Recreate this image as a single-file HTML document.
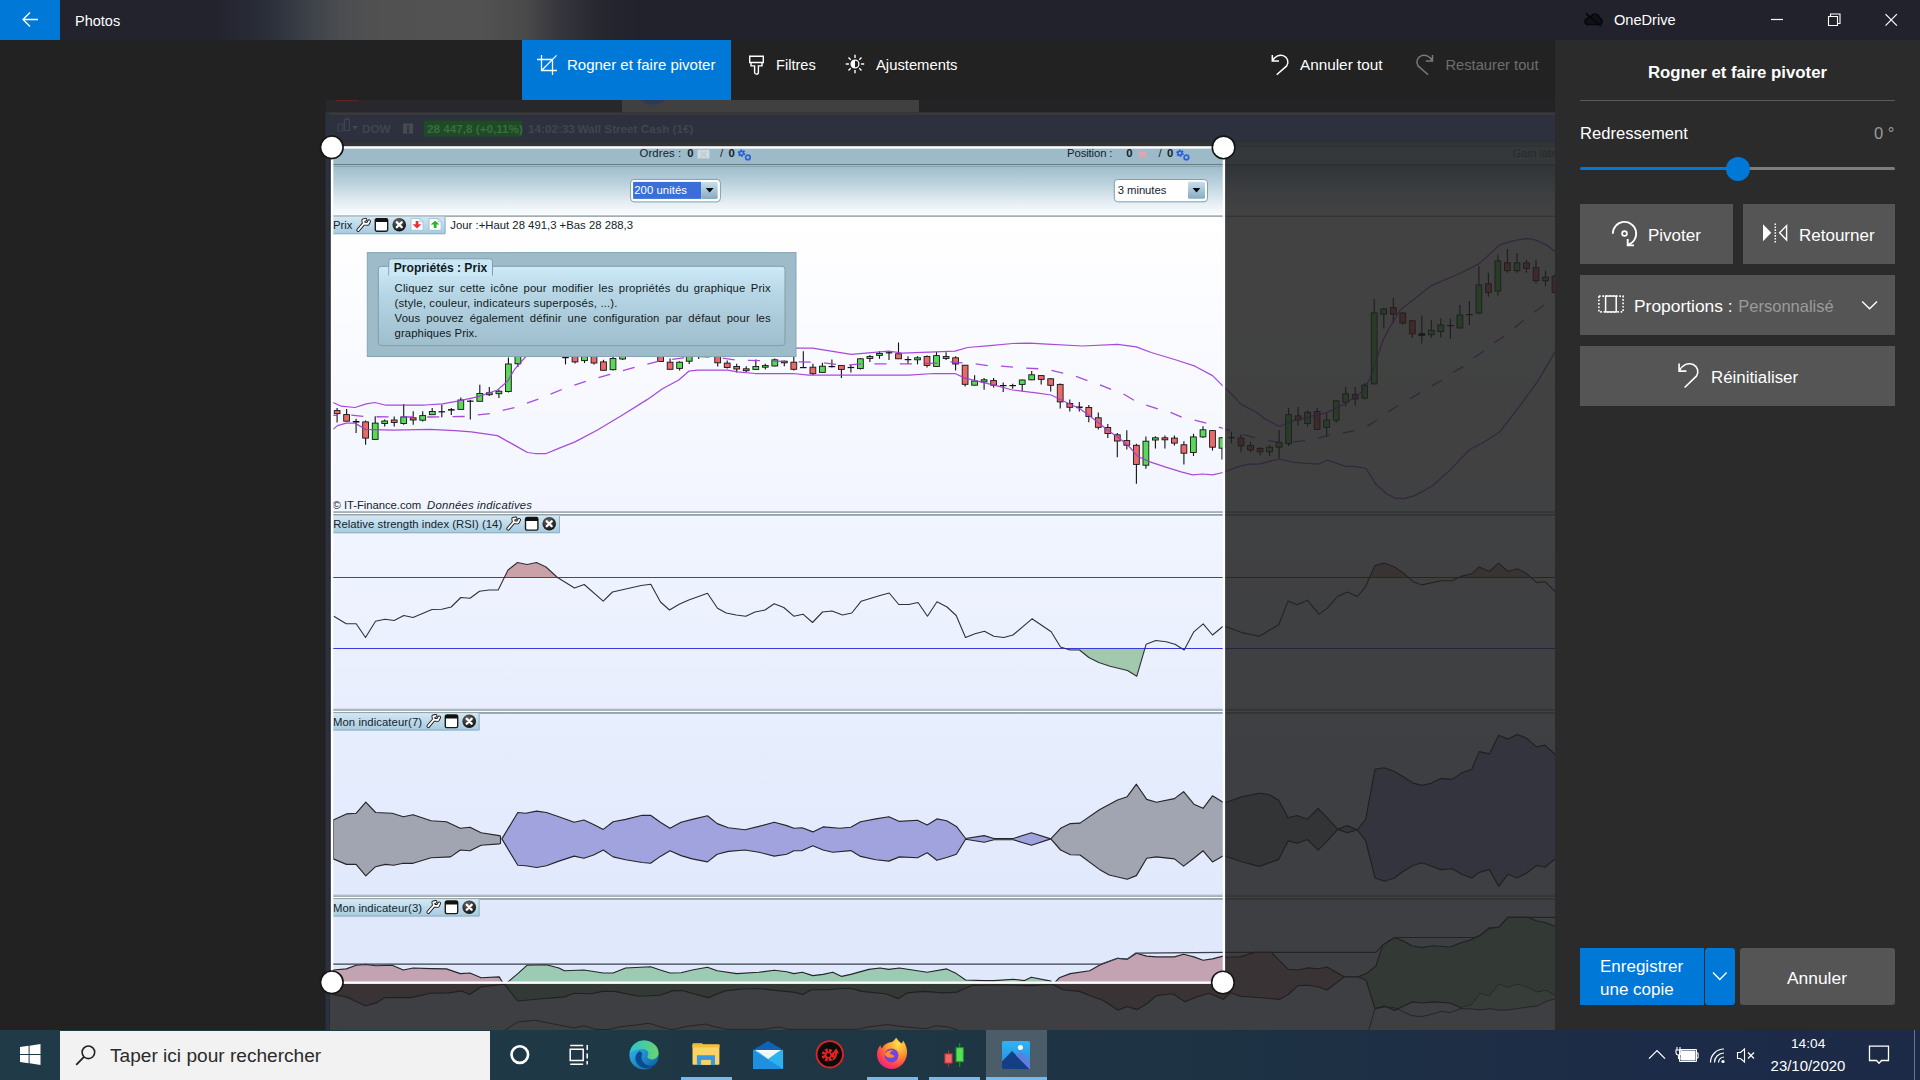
<!DOCTYPE html><html><head><meta charset="utf-8"><title>Photos</title><style>

*{box-sizing:border-box}
html,body{margin:0;padding:0}
body{width:1920px;height:1080px;overflow:hidden;background:#222222;position:relative;font-family:"Liberation Sans",sans-serif;color:#fff}
.abs{position:absolute}
#titlebar{left:0;top:0;width:1920px;height:40px;background:linear-gradient(90deg,#23232e 0px,#23232e 215px,#2b2f3a 270px,#3b4048 305px,#4b4d50 340px,#515151 380px,#525252 480px,#4a4a4a 525px,#35353d 560px,#26262f 600px,#22222d 640px,#22222d 1920px)}
#back{left:0;top:0;width:60px;height:40px;background:#0078d7}
.t{position:absolute;white-space:nowrap;line-height:1}
#toolbar{left:0;top:40px;width:1555px;height:60px;background:#222222}
#tab{left:522px;top:40px;width:209px;height:60px;background:#0078d7}
#panel{left:1555px;top:40px;width:365px;height:990px;background:#2b2b2b}
.btn{position:absolute;background:#555555}
#taskbar{left:0;top:1030px;width:1920px;height:50px;background:linear-gradient(90deg,#203a47 0px,#1f3845 600px,#1e3444 1100px,#1d2f44 1400px,#1c2b47 1650px,#1c2a48 1920px)}
#search{left:60px;top:1031px;width:430px;height:49px;background:#f2f2f2}
.ul{position:absolute;top:1077px;height:3px;background:#76b9ed}
#canvas{left:0;top:100px;width:1555px;height:930px;overflow:hidden}
.tip{position:absolute;font-size:11.3px;color:#111a20;white-space:nowrap;line-height:1}
.j{text-align:justify;text-align-last:justify;white-space:normal}

</style></head><body>
<div id="canvas" class="abs">
<svg class="abs" style="left:0;top:0" width="1555" height="930" viewBox="0 100 1555 930" font-family="Liberation Sans, sans-serif" font-size="11.3">
<defs>
<linearGradient id="hdr" x1="0" y1="0" x2="0" y2="1"><stop offset="0" stop-color="#9fbccb"/><stop offset="0.350" stop-color="#bcd2dd"/><stop offset="0.750" stop-color="#e6eff4"/><stop offset="1" stop-color="#fcfdfe"/></linearGradient>
<linearGradient id="pp" x1="0" y1="0" x2="0" y2="1"><stop offset="0" stop-color="#ffffff"/><stop offset="1" stop-color="#f2f5ff"/></linearGradient>
<linearGradient id="pr" x1="0" y1="0" x2="0" y2="1"><stop offset="0" stop-color="#f1f5ff"/><stop offset="1" stop-color="#e8eefd"/></linearGradient>
<linearGradient id="p2" x1="0" y1="0" x2="0" y2="1"><stop offset="0" stop-color="#e7eefd"/><stop offset="1" stop-color="#e1e9fc"/></linearGradient>
<linearGradient id="lbl" x1="0" y1="0" x2="0" y2="1"><stop offset="0" stop-color="#d3e8f3"/><stop offset="1" stop-color="#a6cadf"/></linearGradient>
<linearGradient id="tipg" x1="0" y1="0" x2="0" y2="1"><stop offset="0" stop-color="#cdeaf8"/><stop offset="0.350" stop-color="#b7d6e5"/><stop offset="1" stop-color="#9fbecd"/></linearGradient>
<linearGradient id="btng" x1="0" y1="0" x2="0" y2="1"><stop offset="0" stop-color="#c8deea"/><stop offset="1" stop-color="#86acc1"/></linearGradient>
<radialGradient id="xg" cx="0.400" cy="0.300" r="0.800"><stop offset="0" stop-color="#6a6a6a"/><stop offset="1" stop-color="#050505"/></radialGradient>
<clipPath id="chclip"><rect x="329.500" y="147" width="1226" height="884"/></clipPath>
<clipPath id="cropclip"><rect x="332" y="147.400" width="891.700" height="835.200"/></clipPath>
</defs>
<g clip-path="url(#chclip)">
<rect x="329.5" y="147" width="1225.5" height="17.200" fill="#9dbac8"/>
<rect x="329.5" y="164.200" width="1225.5" height="1" fill="#708d9b"/>
<rect x="329.5" y="165.200" width="1225.5" height="1" fill="#c4d9e3"/>
<rect x="329.5" y="166.200" width="1225.5" height="49.600" fill="url(#hdr)"/>
<rect x="329.5" y="215.600" width="1225.5" height="1" fill="#9cb1bc"/>
<rect x="329.5" y="216.600" width="1225.5" height="295" fill="url(#pp)"/>
<rect x="329.5" y="511.0" width="1225.5" height="1.800" fill="#abbcc4"/>
<rect x="329.5" y="512.8" width="1225.5" height="1.500" fill="#fbfdff"/>
<rect x="329.5" y="514.3" width="1225.5" height="1.600" fill="#a9bac6"/>
<rect x="329.5" y="708.9" width="1225.5" height="1.800" fill="#abbcc4"/>
<rect x="329.5" y="710.6999999999999" width="1225.5" height="1.500" fill="#fbfdff"/>
<rect x="329.5" y="712.1999999999999" width="1225.5" height="1.600" fill="#a9bac6"/>
<rect x="329.5" y="894.9" width="1225.5" height="1.800" fill="#abbcc4"/>
<rect x="329.5" y="896.6999999999999" width="1225.5" height="1.500" fill="#fbfdff"/>
<rect x="329.5" y="898.1999999999999" width="1225.5" height="1.600" fill="#a9bac6"/>
<rect x="329.5" y="515.900" width="1225.5" height="193" fill="url(#pr)"/>
<rect x="329.5" y="713.800" width="1225.5" height="181.100" fill="url(#p2)"/>
<rect x="329.5" y="899.800" width="1225.5" height="131" fill="#e0e8fc"/>
<path d="M337.1 408.1V422.5" stroke="#111" stroke-width="1.1"/>
<rect x="334.2" y="410.6" width="5.8" height="3.1" fill="#e96a6a" stroke="#151515" stroke-width="0.9"/>
<path d="M346.6 409.1V421.2" stroke="#111" stroke-width="1.1"/>
<rect x="343.7" y="414.6" width="5.8" height="6.6" fill="#e96a6a" stroke="#151515" stroke-width="0.9"/>
<path d="M356.1 418.8V433.1" stroke="#111" stroke-width="1.1"/>
<rect x="352.8" y="421.0" width="6.6" height="1.5" fill="#111"/>
<path d="M365.6 420.6V444.8" stroke="#111" stroke-width="1.1"/>
<rect x="362.7" y="421.9" width="5.8" height="16.2" fill="#e96a6a" stroke="#151515" stroke-width="0.9"/>
<path d="M375.2 416.2V439.4" stroke="#111" stroke-width="1.1"/>
<rect x="372.3" y="423.1" width="5.8" height="16.3" fill="#58d958" stroke="#151515" stroke-width="0.9"/>
<path d="M384.7 419.4V426.5" stroke="#111" stroke-width="1.1"/>
<rect x="381.8" y="421.0" width="5.8" height="2.5" fill="#58d958" stroke="#151515" stroke-width="0.9"/>
<path d="M394.2 416.5V426.5" stroke="#111" stroke-width="1.1"/>
<rect x="391.3" y="420.0" width="5.8" height="2.5" fill="#e96a6a" stroke="#151515" stroke-width="0.9"/>
<path d="M403.7 404.0V424.8" stroke="#111" stroke-width="1.1"/>
<rect x="400.8" y="416.9" width="5.8" height="6.6" fill="#58d958" stroke="#151515" stroke-width="0.9"/>
<path d="M413.2 411.2V424.8" stroke="#111" stroke-width="1.1"/>
<rect x="410.3" y="417.8" width="5.8" height="2.2" fill="#e96a6a" stroke="#151515" stroke-width="0.9"/>
<path d="M422.7 411.2V421.5" stroke="#111" stroke-width="1.1"/>
<rect x="419.8" y="415.6" width="5.8" height="4.6" fill="#58d958" stroke="#151515" stroke-width="0.9"/>
<path d="M432.2 408.1V415.0" stroke="#111" stroke-width="1.1"/>
<rect x="429.4" y="411.5" width="5.8" height="3.2" fill="#58d958" stroke="#151515" stroke-width="0.9"/>
<path d="M441.8 404.4V417.2" stroke="#111" stroke-width="1.1"/>
<rect x="438.5" y="411.2" width="6.6" height="1.2" fill="#111"/>
<path d="M451.3 408.1V415.0" stroke="#111" stroke-width="1.1"/>
<rect x="448.0" y="409.1" width="6.6" height="1.5" fill="#111"/>
<path d="M460.8 397.5V409.4" stroke="#111" stroke-width="1.1"/>
<rect x="457.9" y="400.0" width="5.8" height="9.4" fill="#58d958" stroke="#151515" stroke-width="0.9"/>
<path d="M470.3 399.8V419.4" stroke="#111" stroke-width="1.1"/>
<rect x="467.0" y="400.6" width="6.6" height="1.2" fill="#111"/>
<path d="M479.8 384.8V401.2" stroke="#111" stroke-width="1.1"/>
<rect x="476.9" y="393.5" width="5.8" height="7.8" fill="#58d958" stroke="#151515" stroke-width="0.9"/>
<path d="M489.3 386.9V396.0" stroke="#111" stroke-width="1.1"/>
<rect x="486.4" y="392.8" width="5.8" height="1.9" fill="#58d958" stroke="#151515" stroke-width="0.9"/>
<path d="M498.9 389.8V398.1" stroke="#111" stroke-width="1.1"/>
<rect x="496.0" y="391.2" width="5.8" height="2.5" fill="#58d958" stroke="#151515" stroke-width="0.9"/>
<path d="M508.4 357.5V392.5" stroke="#111" stroke-width="1.1"/>
<rect x="505.5" y="364.0" width="5.8" height="27.5" fill="#58d958" stroke="#151515" stroke-width="0.9"/>
<path d="M517.9 340.0V367.0" stroke="#111" stroke-width="1.1"/>
<rect x="515.0" y="342.0" width="5.8" height="21.8" fill="#58d958" stroke="#151515" stroke-width="0.9"/>
<path d="M565.5 357.2V364.4" stroke="#111" stroke-width="1.1"/>
<rect x="562.2" y="357.0" width="6.6" height="1.2" fill="#111"/>
<path d="M575.0 350.0V363.5" stroke="#111" stroke-width="1.1"/>
<rect x="572.1" y="352.0" width="5.8" height="9.9" fill="#e96a6a" stroke="#151515" stroke-width="0.9"/>
<path d="M584.5 350.0V363.0" stroke="#111" stroke-width="1.1"/>
<rect x="581.6" y="352.0" width="5.8" height="8.6" fill="#58d958" stroke="#151515" stroke-width="0.9"/>
<path d="M594.0 350.0V364.4" stroke="#111" stroke-width="1.1"/>
<rect x="591.1" y="352.0" width="5.8" height="11.0" fill="#e96a6a" stroke="#151515" stroke-width="0.9"/>
<path d="M603.5 359.8V370.2" stroke="#111" stroke-width="1.1"/>
<rect x="600.6" y="361.9" width="5.8" height="8.4" fill="#e96a6a" stroke="#151515" stroke-width="0.9"/>
<path d="M613.0 352.0V370.6" stroke="#111" stroke-width="1.1"/>
<rect x="610.1" y="358.5" width="5.8" height="11.2" fill="#58d958" stroke="#151515" stroke-width="0.9"/>
<path d="M622.6 350.0V360.0" stroke="#111" stroke-width="1.1"/>
<rect x="619.7" y="352.0" width="5.8" height="7.0" fill="#58d958" stroke="#151515" stroke-width="0.9"/>
<path d="M660.6 350.0V361.5" stroke="#111" stroke-width="1.1"/>
<rect x="657.7" y="352.0" width="5.8" height="9.5" fill="#e96a6a" stroke="#151515" stroke-width="0.9"/>
<path d="M670.1 358.5V369.4" stroke="#111" stroke-width="1.1"/>
<rect x="667.2" y="362.2" width="5.8" height="7.1" fill="#e96a6a" stroke="#151515" stroke-width="0.9"/>
<path d="M679.6 361.2V370.6" stroke="#111" stroke-width="1.1"/>
<rect x="676.7" y="362.2" width="5.8" height="6.2" fill="#58d958" stroke="#151515" stroke-width="0.9"/>
<path d="M689.2 350.0V364.0" stroke="#111" stroke-width="1.1"/>
<rect x="686.3" y="352.0" width="5.8" height="9.2" fill="#58d958" stroke="#151515" stroke-width="0.9"/>
<path d="M698.7 350.0V359.0" stroke="#111" stroke-width="1.1"/>
<rect x="695.4" y="350.0" width="6.6" height="1.2" fill="#111"/>
<path d="M717.7 350.0V366.5" stroke="#111" stroke-width="1.1"/>
<rect x="714.8" y="352.0" width="5.8" height="10.8" fill="#e96a6a" stroke="#151515" stroke-width="0.9"/>
<path d="M727.2 360.6V368.5" stroke="#111" stroke-width="1.1"/>
<rect x="724.3" y="363.1" width="5.8" height="4.4" fill="#e96a6a" stroke="#151515" stroke-width="0.9"/>
<path d="M736.7 363.8V372.5" stroke="#111" stroke-width="1.1"/>
<rect x="733.8" y="366.5" width="5.8" height="2.5" fill="#e96a6a" stroke="#151515" stroke-width="0.9"/>
<path d="M746.2 366.2V371.9" stroke="#111" stroke-width="1.1"/>
<rect x="743.3" y="368.8" width="5.8" height="1.9" fill="#e96a6a" stroke="#151515" stroke-width="0.9"/>
<path d="M755.8 359.4V369.4" stroke="#111" stroke-width="1.1"/>
<rect x="752.9" y="366.5" width="5.8" height="2.9" fill="#58d958" stroke="#151515" stroke-width="0.9"/>
<path d="M765.3 363.8V369.4" stroke="#111" stroke-width="1.1"/>
<rect x="762.4" y="365.6" width="5.8" height="1.6" fill="#58d958" stroke="#151515" stroke-width="0.9"/>
<path d="M774.8 358.5V366.5" stroke="#111" stroke-width="1.1"/>
<rect x="771.9" y="359.8" width="5.8" height="6.2" fill="#58d958" stroke="#151515" stroke-width="0.9"/>
<path d="M784.3 360.6V366.2" stroke="#111" stroke-width="1.1"/>
<rect x="781.4" y="361.2" width="5.8" height="1.6" fill="#e96a6a" stroke="#151515" stroke-width="0.9"/>
<path d="M793.8 356.9V370.6" stroke="#111" stroke-width="1.1"/>
<rect x="790.9" y="362.2" width="5.8" height="7.1" fill="#e96a6a" stroke="#151515" stroke-width="0.9"/>
<path d="M803.3 351.2V368.1" stroke="#111" stroke-width="1.1"/>
<rect x="800.0" y="367.0" width="6.6" height="1.2" fill="#111"/>
<path d="M812.9 363.8V375.0" stroke="#111" stroke-width="1.1"/>
<rect x="810.0" y="367.2" width="5.8" height="6.5" fill="#e96a6a" stroke="#151515" stroke-width="0.9"/>
<path d="M822.4 362.8V372.5" stroke="#111" stroke-width="1.1"/>
<rect x="819.5" y="366.2" width="5.8" height="6.2" fill="#58d958" stroke="#151515" stroke-width="0.9"/>
<path d="M831.9 359.4V367.5" stroke="#111" stroke-width="1.1"/>
<rect x="828.6" y="366.0" width="6.6" height="1.2" fill="#111"/>
<path d="M841.4 365.0V378.1" stroke="#111" stroke-width="1.1"/>
<rect x="838.5" y="365.4" width="5.8" height="4.0" fill="#e96a6a" stroke="#151515" stroke-width="0.9"/>
<path d="M850.9 365.0V372.5" stroke="#111" stroke-width="1.1"/>
<rect x="847.6" y="366.9" width="6.6" height="1.2" fill="#111"/>
<path d="M860.4 358.1V369.4" stroke="#111" stroke-width="1.1"/>
<rect x="857.5" y="358.8" width="5.8" height="9.8" fill="#58d958" stroke="#151515" stroke-width="0.9"/>
<path d="M869.9 355.0V361.9" stroke="#111" stroke-width="1.1"/>
<rect x="867.0" y="356.5" width="5.8" height="2.0" fill="#58d958" stroke="#151515" stroke-width="0.9"/>
<path d="M879.5 351.2V358.8" stroke="#111" stroke-width="1.1"/>
<rect x="876.6" y="353.5" width="5.8" height="1.9" fill="#58d958" stroke="#151515" stroke-width="0.9"/>
<path d="M889.0 351.2V360.0" stroke="#111" stroke-width="1.1"/>
<rect x="885.7" y="352.2" width="6.6" height="1.2" fill="#111"/>
<path d="M898.5 342.5V358.8" stroke="#111" stroke-width="1.1"/>
<rect x="895.6" y="353.8" width="5.8" height="5.0" fill="#e96a6a" stroke="#151515" stroke-width="0.9"/>
<path d="M908.0 356.2V364.0" stroke="#111" stroke-width="1.1"/>
<rect x="904.7" y="359.0" width="6.6" height="1.2" fill="#111"/>
<path d="M917.5 356.2V364.4" stroke="#111" stroke-width="1.1"/>
<rect x="914.6" y="357.8" width="5.8" height="2.0" fill="#58d958" stroke="#151515" stroke-width="0.9"/>
<path d="M927.0 355.6V367.5" stroke="#111" stroke-width="1.1"/>
<rect x="924.1" y="356.5" width="5.8" height="8.9" fill="#e96a6a" stroke="#151515" stroke-width="0.9"/>
<path d="M936.5 351.9V366.5" stroke="#111" stroke-width="1.1"/>
<rect x="933.6" y="355.6" width="5.8" height="10.9" fill="#58d958" stroke="#151515" stroke-width="0.9"/>
<path d="M946.1 352.2V360.0" stroke="#111" stroke-width="1.1"/>
<rect x="943.2" y="356.5" width="5.8" height="2.0" fill="#e96a6a" stroke="#151515" stroke-width="0.9"/>
<path d="M955.6 356.2V370.6" stroke="#111" stroke-width="1.1"/>
<rect x="952.7" y="357.8" width="5.8" height="6.2" fill="#e96a6a" stroke="#151515" stroke-width="0.9"/>
<path d="M965.1 365.0V386.5" stroke="#111" stroke-width="1.1"/>
<rect x="962.2" y="365.2" width="5.8" height="19.1" fill="#e96a6a" stroke="#151515" stroke-width="0.9"/>
<path d="M974.6 375.2V385.2" stroke="#111" stroke-width="1.1"/>
<rect x="971.7" y="381.0" width="5.8" height="4.2" fill="#58d958" stroke="#151515" stroke-width="0.9"/>
<path d="M984.1 378.1V389.8" stroke="#111" stroke-width="1.1"/>
<rect x="981.2" y="379.8" width="5.8" height="2.1" fill="#58d958" stroke="#151515" stroke-width="0.9"/>
<path d="M993.6 378.1V387.5" stroke="#111" stroke-width="1.1"/>
<rect x="990.7" y="380.6" width="5.8" height="4.6" fill="#e96a6a" stroke="#151515" stroke-width="0.9"/>
<path d="M1003.2 382.5V391.9" stroke="#111" stroke-width="1.1"/>
<rect x="999.9" y="385.0" width="6.6" height="1.2" fill="#111"/>
<path d="M1012.7 383.8V388.8" stroke="#111" stroke-width="1.1"/>
<rect x="1009.4" y="385.0" width="6.6" height="1.2" fill="#111"/>
<path d="M1022.2 379.4V391.2" stroke="#111" stroke-width="1.1"/>
<rect x="1019.3" y="380.0" width="5.8" height="4.4" fill="#58d958" stroke="#151515" stroke-width="0.9"/>
<path d="M1031.7 371.0V380.2" stroke="#111" stroke-width="1.1"/>
<rect x="1028.8" y="374.8" width="5.8" height="5.0" fill="#58d958" stroke="#151515" stroke-width="0.9"/>
<path d="M1041.2 375.0V384.4" stroke="#111" stroke-width="1.1"/>
<rect x="1038.3" y="375.6" width="5.8" height="3.8" fill="#e96a6a" stroke="#151515" stroke-width="0.9"/>
<path d="M1050.7 378.1V391.5" stroke="#111" stroke-width="1.1"/>
<rect x="1047.8" y="378.8" width="5.8" height="6.5" fill="#e96a6a" stroke="#151515" stroke-width="0.9"/>
<path d="M1060.2 383.5V408.5" stroke="#111" stroke-width="1.1"/>
<rect x="1057.3" y="384.4" width="5.8" height="17.5" fill="#e96a6a" stroke="#151515" stroke-width="0.9"/>
<path d="M1069.8 399.4V411.5" stroke="#111" stroke-width="1.1"/>
<rect x="1066.9" y="403.5" width="5.8" height="3.8" fill="#e96a6a" stroke="#151515" stroke-width="0.9"/>
<path d="M1079.3 401.9V411.5" stroke="#111" stroke-width="1.1"/>
<rect x="1076.0" y="406.5" width="6.6" height="1.6" fill="#111"/>
<path d="M1088.8 405.0V422.2" stroke="#111" stroke-width="1.1"/>
<rect x="1085.9" y="407.5" width="5.8" height="9.0" fill="#e96a6a" stroke="#151515" stroke-width="0.9"/>
<path d="M1098.3 412.5V429.4" stroke="#111" stroke-width="1.1"/>
<rect x="1095.4" y="417.8" width="5.8" height="9.5" fill="#e96a6a" stroke="#151515" stroke-width="0.9"/>
<path d="M1107.8 424.0V438.1" stroke="#111" stroke-width="1.1"/>
<rect x="1104.9" y="427.5" width="5.8" height="6.0" fill="#e96a6a" stroke="#151515" stroke-width="0.9"/>
<path d="M1117.3 433.1V457.2" stroke="#111" stroke-width="1.1"/>
<rect x="1114.4" y="434.8" width="5.8" height="6.2" fill="#e96a6a" stroke="#151515" stroke-width="0.9"/>
<path d="M1126.8 430.2V449.4" stroke="#111" stroke-width="1.1"/>
<rect x="1123.9" y="440.6" width="5.8" height="4.6" fill="#e96a6a" stroke="#151515" stroke-width="0.9"/>
<path d="M1136.4 443.8V483.8" stroke="#111" stroke-width="1.1"/>
<rect x="1133.5" y="445.3" width="5.8" height="19.1" fill="#e96a6a" stroke="#151515" stroke-width="0.9"/>
<path d="M1145.9 436.4V468.8" stroke="#111" stroke-width="1.1"/>
<rect x="1143.0" y="441.2" width="5.8" height="24.0" fill="#58d958" stroke="#151515" stroke-width="0.9"/>
<path d="M1155.4 436.2V448.5" stroke="#111" stroke-width="1.1"/>
<rect x="1152.5" y="437.8" width="5.8" height="2.2" fill="#58d958" stroke="#151515" stroke-width="0.9"/>
<path d="M1164.9 435.6V448.5" stroke="#111" stroke-width="1.1"/>
<rect x="1162.0" y="437.8" width="5.8" height="2.0" fill="#e96a6a" stroke="#151515" stroke-width="0.9"/>
<path d="M1174.4 435.6V445.6" stroke="#111" stroke-width="1.1"/>
<rect x="1171.5" y="438.1" width="5.8" height="5.0" fill="#e96a6a" stroke="#151515" stroke-width="0.9"/>
<path d="M1183.9 441.2V464.4" stroke="#111" stroke-width="1.1"/>
<rect x="1181.0" y="444.8" width="5.8" height="8.4" fill="#e96a6a" stroke="#151515" stroke-width="0.9"/>
<path d="M1193.5 433.8V456.0" stroke="#111" stroke-width="1.1"/>
<rect x="1190.5" y="436.9" width="5.8" height="15.6" fill="#58d958" stroke="#151515" stroke-width="0.9"/>
<path d="M1203.0 426.2V438.1" stroke="#111" stroke-width="1.1"/>
<rect x="1200.1" y="429.8" width="5.8" height="7.1" fill="#58d958" stroke="#151515" stroke-width="0.9"/>
<path d="M1212.5 430.0V450.6" stroke="#111" stroke-width="1.1"/>
<rect x="1209.6" y="430.6" width="5.8" height="16.6" fill="#e96a6a" stroke="#151515" stroke-width="0.9"/>
<path d="M1222.0 436.9V459.4" stroke="#111" stroke-width="1.1"/>
<rect x="1219.1" y="437.8" width="5.8" height="10.4" fill="#58d958" stroke="#151515" stroke-width="0.9"/>
<path d="M1231.5 431.8V443.3" stroke="#111" stroke-width="1.1"/>
<rect x="1228.2" y="437.0" width="6.6" height="1.2" fill="#111"/>
<path d="M1241.0 434.5V452.2" stroke="#111" stroke-width="1.1"/>
<rect x="1238.1" y="438.0" width="5.8" height="8.0" fill="#e96a6a" stroke="#151515" stroke-width="0.9"/>
<path d="M1250.5 441.6V452.2" stroke="#111" stroke-width="1.1"/>
<rect x="1247.6" y="445.5" width="5.8" height="4.5" fill="#e96a6a" stroke="#151515" stroke-width="0.9"/>
<path d="M1260.1 446.9V455.4" stroke="#111" stroke-width="1.1"/>
<rect x="1257.2" y="448.6" width="5.8" height="3.2" fill="#e96a6a" stroke="#151515" stroke-width="0.9"/>
<path d="M1269.6 445.1V456.0" stroke="#111" stroke-width="1.1"/>
<rect x="1266.7" y="447.2" width="5.8" height="4.6" fill="#58d958" stroke="#151515" stroke-width="0.9"/>
<path d="M1279.1 430.0V458.4" stroke="#111" stroke-width="1.1"/>
<rect x="1276.2" y="442.4" width="5.8" height="4.8" fill="#58d958" stroke="#151515" stroke-width="0.9"/>
<path d="M1288.6 407.9V446.0" stroke="#111" stroke-width="1.1"/>
<rect x="1285.7" y="414.6" width="5.8" height="29.1" fill="#58d958" stroke="#151515" stroke-width="0.9"/>
<path d="M1298.1 407.0V425.6" stroke="#111" stroke-width="1.1"/>
<rect x="1295.2" y="415.9" width="5.8" height="4.1" fill="#e96a6a" stroke="#151515" stroke-width="0.9"/>
<path d="M1307.6 410.6V426.5" stroke="#111" stroke-width="1.1"/>
<rect x="1304.7" y="412.3" width="5.8" height="11.2" fill="#58d958" stroke="#151515" stroke-width="0.9"/>
<path d="M1317.1 407.9V430.0" stroke="#111" stroke-width="1.1"/>
<rect x="1314.2" y="411.5" width="5.8" height="18.0" fill="#e96a6a" stroke="#151515" stroke-width="0.9"/>
<path d="M1326.7 413.2V437.1" stroke="#111" stroke-width="1.1"/>
<rect x="1323.8" y="420.0" width="5.8" height="7.4" fill="#58d958" stroke="#151515" stroke-width="0.9"/>
<path d="M1336.2 400.0V423.0" stroke="#111" stroke-width="1.1"/>
<rect x="1333.3" y="400.8" width="5.8" height="19.5" fill="#58d958" stroke="#151515" stroke-width="0.9"/>
<path d="M1345.7 387.0V406.5" stroke="#111" stroke-width="1.1"/>
<rect x="1342.8" y="393.8" width="5.8" height="8.5" fill="#58d958" stroke="#151515" stroke-width="0.9"/>
<path d="M1355.2 387.0V405.8" stroke="#111" stroke-width="1.1"/>
<rect x="1352.3" y="394.6" width="5.8" height="4.4" fill="#e96a6a" stroke="#151515" stroke-width="0.9"/>
<path d="M1364.7 383.1V399.4" stroke="#111" stroke-width="1.1"/>
<rect x="1361.8" y="385.2" width="5.8" height="12.9" fill="#58d958" stroke="#151515" stroke-width="0.9"/>
<path d="M1374.2 299.0V384.0" stroke="#111" stroke-width="1.1"/>
<rect x="1371.3" y="312.9" width="5.8" height="71.0" fill="#58d958" stroke="#151515" stroke-width="0.9"/>
<path d="M1383.8 307.7V328.5" stroke="#111" stroke-width="1.1"/>
<rect x="1380.8" y="309.0" width="5.8" height="5.2" fill="#58d958" stroke="#151515" stroke-width="0.9"/>
<path d="M1393.3 298.0V323.0" stroke="#111" stroke-width="1.1"/>
<rect x="1390.4" y="307.7" width="5.8" height="6.5" fill="#e96a6a" stroke="#151515" stroke-width="0.9"/>
<path d="M1402.8 312.0V325.0" stroke="#111" stroke-width="1.1"/>
<rect x="1399.9" y="313.0" width="5.8" height="10.0" fill="#e96a6a" stroke="#151515" stroke-width="0.9"/>
<path d="M1412.3 320.0V338.0" stroke="#111" stroke-width="1.1"/>
<rect x="1409.4" y="320.7" width="5.8" height="13.1" fill="#e96a6a" stroke="#151515" stroke-width="0.9"/>
<path d="M1421.8 315.5V343.4" stroke="#111" stroke-width="1.1"/>
<rect x="1418.5" y="333.0" width="6.6" height="3.0" fill="#111"/>
<path d="M1431.3 320.0V338.0" stroke="#111" stroke-width="1.1"/>
<rect x="1428.4" y="330.3" width="5.8" height="4.4" fill="#58d958" stroke="#151515" stroke-width="0.9"/>
<path d="M1440.8 318.5V337.3" stroke="#111" stroke-width="1.1"/>
<rect x="1437.9" y="325.0" width="5.8" height="6.6" fill="#58d958" stroke="#151515" stroke-width="0.9"/>
<path d="M1450.4 318.5V339.0" stroke="#111" stroke-width="1.1"/>
<rect x="1447.1" y="325.0" width="6.6" height="1.2" fill="#111"/>
<path d="M1459.9 305.0V328.0" stroke="#111" stroke-width="1.1"/>
<rect x="1457.0" y="315.0" width="5.8" height="13.0" fill="#58d958" stroke="#151515" stroke-width="0.9"/>
<path d="M1469.4 301.0V325.1" stroke="#111" stroke-width="1.1"/>
<rect x="1466.1" y="314.0" width="6.6" height="1.2" fill="#111"/>
<path d="M1478.9 266.3V314.2" stroke="#111" stroke-width="1.1"/>
<rect x="1476.0" y="285.0" width="5.8" height="28.0" fill="#58d958" stroke="#151515" stroke-width="0.9"/>
<path d="M1488.4 272.8V296.8" stroke="#111" stroke-width="1.1"/>
<rect x="1485.5" y="283.7" width="5.8" height="8.7" fill="#e96a6a" stroke="#151515" stroke-width="0.9"/>
<path d="M1497.9 254.5V295.5" stroke="#111" stroke-width="1.1"/>
<rect x="1495.0" y="261.0" width="5.8" height="30.0" fill="#58d958" stroke="#151515" stroke-width="0.9"/>
<path d="M1507.4 249.0V272.8" stroke="#111" stroke-width="1.1"/>
<rect x="1504.5" y="262.8" width="5.8" height="7.9" fill="#e96a6a" stroke="#151515" stroke-width="0.9"/>
<path d="M1517.0 253.0V272.8" stroke="#111" stroke-width="1.1"/>
<rect x="1514.1" y="262.8" width="5.8" height="7.9" fill="#58d958" stroke="#151515" stroke-width="0.9"/>
<path d="M1526.5 259.8V272.8" stroke="#111" stroke-width="1.1"/>
<rect x="1523.6" y="262.8" width="5.8" height="5.7" fill="#e96a6a" stroke="#151515" stroke-width="0.9"/>
<path d="M1536.0 259.8V283.7" stroke="#111" stroke-width="1.1"/>
<rect x="1533.1" y="267.6" width="5.8" height="13.1" fill="#e96a6a" stroke="#151515" stroke-width="0.9"/>
<path d="M1545.5 270.7V286.0" stroke="#111" stroke-width="1.1"/>
<rect x="1542.6" y="277.2" width="5.8" height="3.5" fill="#58d958" stroke="#151515" stroke-width="0.9"/>
<path d="M1555.0 274.0V294.0" stroke="#111" stroke-width="1.1"/>
<rect x="1552.1" y="276.3" width="5.8" height="16.1" fill="#e96a6a" stroke="#151515" stroke-width="0.9"/>
<polyline points="333.1,402.5 341.2,406.2 355.0,407.5 366.2,403.8 375.0,402.5 385.0,405.0 425.0,405.0 442.5,403.8 457.5,401.2 477.5,396.9 497.5,390.0 507.5,381.2 515.0,368.8 525.0,357.5 540.0,345.0 600.0,340.0 700.0,340.0 796.0,348.1 812.5,348.1 851.2,354.4 877.5,352.2 888.8,351.2 902.5,353.1 955.0,351.2 967.5,347.5 990.0,345.6 1012.5,343.5 1030.0,343.1 1042.5,343.8 1082.5,346.0 1117.5,344.4 1136.2,346.9 1151.2,352.5 1176.2,360.0 1195.0,366.2 1212.5,375.6 1222.5,385.6 1232.5,395.0 1241.2,404.4 1256.6,412.2 1264.3,418.5 1279.3,426.5 1294.4,420.3 1326.2,412.9 1344.0,404.4 1361.7,392.0 1370.5,377.8 1377.6,356.6 1382.9,340.6 1388.2,330.0 1400.3,309.9 1430.7,285.9 1461.2,272.8 1478.6,264.1 1499.8,244.8 1512.2,241.2 1520.0,239.5 1527.2,238.6 1533.0,239.3 1538.8,241.2 1547.6,245.6 1556.0,252.5" fill="none" stroke="#a03cd6" stroke-width="1.250" stroke-linejoin="round" stroke-opacity="0.920"/>
<polyline points="333.1,429.4 337.5,425.6 346.2,423.1 355.0,423.1 365.6,429.4 392.5,430.2 430.0,429.4 455.0,430.6 471.2,431.9 497.5,435.6 517.5,446.9 527.5,452.5 535.0,453.5 546.2,453.5 560.0,447.8 575.0,441.9 597.5,430.0 622.5,415.0 647.5,399.4 662.5,388.8 678.8,380.0 688.8,371.2 697.5,370.2 727.5,370.2 737.5,371.9 755.0,373.5 792.5,373.5 808.8,375.2 908.8,375.2 933.8,373.5 955.0,373.5 965.0,378.1 977.5,381.2 996.2,385.6 1012.5,390.0 1030.0,392.2 1036.2,392.8 1051.2,395.0 1061.2,400.0 1080.0,408.8 1095.0,420.0 1107.5,430.0 1120.0,438.8 1130.0,447.5 1137.5,456.2 1150.0,461.9 1165.0,466.9 1181.2,471.9 1192.5,474.8 1202.5,474.0 1212.5,474.8 1223.0,472.5 1237.5,466.9 1247.5,464.4 1260.0,463.8 1278.8,459.0 1295.0,462.5 1318.3,464.2 1327.1,460.2 1345.7,466.4 1354.6,466.4 1366.1,468.5 1375.8,484.1 1386.5,493.8 1395.3,498.2 1404.2,498.6 1414.8,495.6 1432.5,485.8 1450.2,469.9 1469.7,449.5 1482.1,443.3 1499.8,431.8 1521.0,404.4 1538.8,379.6 1556.0,350.0" fill="none" stroke="#a03cd6" stroke-width="1.250" stroke-linejoin="round" stroke-opacity="0.920"/>
<polyline points="333.0,415.4 351.0,415.0 365.0,416.5 390.0,417.0 430.0,417.0 465.0,416.5 490.0,413.5 515.0,407.5 539.0,398.8 562.0,389.4 586.0,381.2 610.0,374.4 635.0,367.2 659.0,361.2 683.0,357.8 700.0,356.5 722.0,358.0 735.0,360.0 760.0,360.6 799.4,361.9 810.6,362.2 823.8,362.8 836.2,364.4 848.8,365.0 861.2,363.8 886.9,363.8 911.9,363.8 937.5,363.1 950.6,361.9 962.5,362.8 975.6,363.8 988.1,365.6 1001.2,366.2 1013.8,367.2 1026.0,368.1 1038.8,368.8 1051.2,370.2 1063.0,373.1 1075.6,376.2 1087.5,380.6 1100.0,384.8 1111.9,389.8 1123.1,393.8 1134.4,400.6 1145.6,405.0 1158.1,409.0 1170.0,412.2 1181.9,417.2 1194.4,420.0 1206.2,423.1 1218.8,427.2 1230.0,430.6 1243.0,434.5 1255.4,437.7 1267.8,440.7 1280.2,442.5 1292.6,441.9 1305.0,440.7 1318.3,438.4 1329.8,434.8 1343.0,433.0 1354.6,430.6 1367.0,426.5 1376.7,420.3 1387.4,412.3 1398.0,405.8 1409.5,399.0 1420.0,392.9 1430.7,386.7 1441.4,380.5 1452.9,372.5 1463.5,366.3 1473.2,358.3 1483.9,351.2 1493.6,343.3 1504.2,336.2 1524.0,320.0 1544.0,305.0 1556.0,297.0" fill="none" stroke="#a03cd6" stroke-width="1.300" stroke-dasharray="12.100 13.250" stroke-dashoffset="-18.250" stroke-opacity="0.920"/>
<polygon points="504.3,577.5 508.0,570.0 517.5,562.5 527.0,564.5 536.5,562.5 546.0,567.0 557.5,577.5" fill="#c9a1a6"/>
<polygon points="1369.6,577.5 1375.0,565.5 1384.3,563.1 1394.4,566.9 1403.7,573.3 1408.3,577.5" fill="#c9a1a6"/>
<polygon points="1458.8,577.5 1461.6,576.1 1471.8,573.8 1479.2,566.9 1489.4,571.5 1498.6,563.1 1507.9,571.5 1517.1,568.7 1526.4,573.3 1531.0,577.5" fill="#c9a1a6"/>
<polygon points="1065.2,648.5 1070.0,650.0 1079.5,650.0 1088.8,657.5 1098.8,662.5 1110.0,666.2 1127.5,670.5 1136.8,676.2 1145.0,648.5" fill="#a2c9ae"/>
<polygon points="1181.8,648.5 1184.2,650.0 1185.0,648.5" fill="#a2c9ae"/>
<path d="M329.5 577.5H1556M329.5 648.5H1556" stroke="#3a3ae2" stroke-width="1"/>
<polyline points="333.8,616.2 346.2,623.8 356.2,623.8 365.5,637.5 375.5,621.2 385.0,619.2 394.2,620.5 403.8,615.5 413.0,617.5 432.0,609.5 441.8,609.2 451.2,607.0 460.8,597.5 470.0,598.2 479.5,591.2 489.2,590.0 498.2,590.0 508.0,570.0 517.5,562.5 527.0,564.5 536.5,562.5 546.0,567.0 557.5,577.5 574.5,588.0 584.2,584.5 603.2,601.2 612.5,592.0 641.2,585.5 650.8,584.2 660.5,602.0 669.5,610.0 679.2,604.2 688.8,600.0 707.5,593.2 717.5,608.2 726.2,613.0 736.2,615.0 745.8,616.2 755.0,612.0 765.0,610.0 774.2,603.8 783.8,607.5 793.8,616.2 803.0,614.2 812.5,622.5 822.5,612.0 832.0,611.0 842.5,615.0 851.8,613.0 861.2,601.2 880.0,595.5 889.2,593.0 898.8,604.5 908.8,604.5 918.0,602.5 927.5,616.2 937.0,601.8 947.0,607.0 956.2,615.5 965.5,637.5 975.0,633.8 984.5,631.2 993.8,636.2 1003.8,637.5 1013.0,635.0 1032.0,618.8 1051.2,631.8 1060.5,647.0 1070.0,650.0 1079.5,650.0 1088.8,657.5 1098.8,662.5 1110.0,666.2 1127.5,670.5 1136.8,676.2 1146.2,644.2 1155.8,640.5 1166.2,641.8 1175.0,644.2 1184.2,650.0 1193.8,631.8 1203.2,623.8 1212.5,635.0 1222.5,626.8 1225.5,626.6 1241.7,632.6 1259.3,636.3 1278.7,624.7 1288.0,601.1 1297.2,604.8 1307.4,600.2 1319.0,614.1 1327.3,608.1 1337.5,596.5 1347.2,591.9 1357.4,596.5 1365.7,586.3 1375.0,565.5 1384.3,563.1 1394.4,566.9 1403.7,573.3 1413.0,581.7 1422.2,584.9 1440.7,580.7 1452.3,580.7 1461.6,576.1 1471.8,573.8 1479.2,566.9 1489.4,571.5 1498.6,563.1 1507.9,571.5 1517.1,568.7 1526.4,573.3 1536.6,582.6 1544.9,581.7 1556.0,592.3" fill="none" stroke="#303236" stroke-width="1.100" stroke-linejoin="round"/>
<polygon points="333.3,820.0 346.4,813.9 356.1,813.3 365.8,802.2 375.6,812.5 392.2,813.3 403.3,816.7 413.1,814.7 431.1,820.8 446.4,821.7 460.3,828.3 470.0,827.2 481.1,832.8 499.2,835.6 500.5,836.0 500.5,843.5 499.2,843.9 481.1,845.3 470.0,850.8 460.3,850.0 450.6,856.9 431.1,857.8 413.1,863.3 403.3,863.3 393.6,865.3 385.3,864.4 375.6,866.7 365.8,875.8 356.1,864.4 346.4,864.4 333.3,858.9" fill="#a1a5b1" stroke="#26262a" stroke-width="1.15" stroke-linejoin="round"/>
<polygon points="501.9,838.9 517.8,812.5 525.6,813.3 536.7,811.1 546.4,812.5 558.9,816.7 574.2,822.2 583.9,820.0 593.6,824.4 603.3,829.4 613.1,821.7 625.6,819.4 642.2,815.3 650.6,815.3 660.3,822.2 670.0,828.3 681.1,822.2 692.2,819.4 707.5,815.8 717.2,823.6 728.3,827.8 745.0,829.7 758.9,826.4 774.2,822.2 786.7,825.6 793.9,828.3 802.2,827.8 812.8,831.9 823.1,826.9 839.7,828.3 850.8,827.2 860.6,821.7 875.8,818.9 888.9,816.7 899.4,821.4 917.5,820.3 927.2,825.0 936.9,818.9 946.7,820.8 956.4,826.4 965.6,838.5 984.2,835.6 993.9,838.5 1013.3,838.5 1031.4,832.8 1050.8,838.9 1050.8,838.9 1031.4,845.3 1013.3,839.7 993.9,839.7 984.2,842.2 965.6,839.3 956.4,854.2 946.7,857.5 936.9,860.3 927.2,852.8 917.5,857.8 899.4,856.9 888.9,861.1 875.8,859.7 860.6,856.4 850.8,850.6 832.8,852.2 823.1,850.0 812.8,845.8 802.2,850.6 793.9,850.8 786.7,854.2 774.2,856.1 758.9,852.2 745.0,850.0 728.3,851.4 717.2,854.2 707.5,861.9 692.2,858.9 681.1,855.6 670.0,850.8 660.3,856.4 650.6,863.3 642.2,862.5 625.6,859.7 613.1,856.9 603.3,850.0 593.6,855.0 583.9,858.3 574.2,856.1 558.9,861.1 546.4,865.8 536.7,867.5 525.6,865.8 517.8,865.3 501.9,838.9" fill="#a0a3dd" stroke="#26262a" stroke-width="1.15" stroke-linejoin="round"/>
<polygon points="1050.8,838.9 1060.6,828.3 1070.3,823.6 1080.0,823.1 1099.4,809.7 1117.5,800.0 1127.2,796.7 1136.4,784.2 1146.7,799.4 1156.4,802.2 1174.4,798.6 1183.6,791.7 1193.9,804.2 1203.1,808.3 1212.5,795.8 1223.0,802.2 1225.5,802.5 1241.7,796.9 1259.3,793.2 1269.4,794.6 1278.7,800.2 1288.0,817.8 1297.2,815.5 1307.4,819.2 1318.1,808.5 1327.3,817.8 1337.5,829.2 1337.5,829.6 1327.3,840.9 1318.1,850.2 1307.4,839.5 1297.2,843.2 1288.0,840.9 1278.7,859.4 1259.3,866.4 1241.7,861.8 1225.5,856.2 1223.0,856.1 1212.5,861.9 1203.1,850.8 1193.9,858.3 1183.6,866.1 1174.4,858.9 1156.4,856.9 1146.7,858.3 1136.4,875.6 1127.2,879.2 1109.2,875.0 1099.4,869.4 1080.0,855.0 1070.3,854.7 1060.6,850.0 1050.8,838.9" fill="#a1a5b1" stroke="#26262a" stroke-width="1.15" stroke-linejoin="round"/>
<polygon points="1337.5,829.4 1347.2,825.6 1357.4,830.0 1365.7,819.2 1375.0,769.2 1384.3,767.8 1394.4,771.5 1403.7,777.0 1413.0,783.1 1422.2,785.4 1431.5,783.1 1440.7,778.4 1452.3,779.4 1461.6,772.9 1471.8,769.2 1479.2,751.6 1489.4,753.9 1498.6,735.4 1507.9,739.1 1517.1,734.4 1526.4,738.1 1536.6,746.9 1544.9,745.1 1556.0,755.3 1556.0,858.1 1544.9,867.3 1536.6,865.5 1526.4,873.3 1517.1,878.0 1507.9,874.3 1498.6,886.3 1489.4,869.6 1479.2,872.4 1471.8,878.0 1461.6,874.3 1452.3,868.7 1440.7,869.6 1422.2,862.7 1413.0,865.5 1403.7,871.0 1394.4,878.0 1384.3,881.2 1375.0,878.0 1365.7,840.9 1357.4,830.0 1347.2,832.6 1337.5,829.4" fill="#a0a3dd" stroke="#26262a" stroke-width="1.15" stroke-linejoin="round"/>
<polygon points="333.3,970.0 346.4,968.9 356.1,965.3 365.8,964.4 375.6,965.8 392.2,965.3 403.3,970.0 413.1,968.0 431.1,968.6 446.4,968.9 460.3,973.6 470.0,973.0 481.1,977.8 499.2,976.9 502.0,981.5 504.5,984.2 504.5,984.2 497.3,985.0 480.5,987.3 469.7,994.5 461.4,990.9 449.4,992.9 430.2,993.3 411.0,997.6 384.7,997.6 376.3,1002.9 365.5,1005.8 346.4,996.9 333.2,994.5" fill="#c3a2b2" stroke="#26262a" stroke-width="1.15" stroke-linejoin="round"/>
<polygon points="504.5,984.2 508.9,981.1 517.8,973.6 526.9,965.3 546.4,964.7 558.9,968.0 564.4,970.8 583.9,970.0 603.3,973.0 613.1,973.0 625.6,968.0 650.6,966.7 660.3,970.0 670.0,973.0 681.1,972.8 692.2,970.0 707.5,967.2 717.2,970.8 736.7,973.6 758.9,972.2 774.2,970.3 786.7,971.7 793.9,973.6 802.2,972.2 812.8,975.6 823.1,974.4 832.8,972.2 841.7,976.4 850.8,974.4 868.9,969.4 880.0,968.0 888.9,969.4 899.4,968.0 917.5,970.8 927.2,972.2 946.7,968.9 956.4,973.6 965.6,980.0 984.2,980.6 993.9,980.6 1013.3,979.2 1024.4,980.6 1031.4,977.2 1050.8,981.1 1053.1,984.5 1053.1,984.5 1030.0,985.6 1000.0,984.8 971.7,985.4 957.3,992.1 942.9,992.9 923.7,991.4 907.0,992.9 898.6,998.6 885.4,993.8 861.5,991.4 851.9,988.5 842.3,988.5 827.9,989.7 811.1,989.7 802.8,994.5 793.2,992.1 780.0,990.9 758.4,988.5 741.7,989.0 724.9,990.9 708.1,997.6 681.8,990.5 672.2,990.9 660.2,995.3 638.6,996.2 614.7,991.4 602.7,991.4 590.7,993.8 574.0,993.3 564.4,996.9 535.6,999.3 517.7,1001.0 504.5,984.2" fill="#9dcab3" stroke="#26262a" stroke-width="1.15" stroke-linejoin="round"/>
<polygon points="1053.1,984.5 1059.2,977.8 1070.3,973.6 1089.7,970.8 1099.4,965.3 1117.5,958.3 1127.2,959.2 1136.4,953.3 1146.7,956.1 1156.4,956.9 1174.4,956.9 1183.6,954.2 1193.9,956.9 1203.1,960.3 1212.5,958.9 1223.0,956.1 1225.0,957.3 1239.5,956.9 1255.4,952.3 1271.4,952.3 1288.2,969.3 1297.9,970.0 1308.5,967.9 1318.3,968.8 1327.1,967.0 1344.0,976.8 1344.0,977.1 1327.1,990.0 1318.3,987.0 1308.5,985.3 1297.9,985.6 1288.2,994.5 1279.3,999.4 1264.3,998.0 1240.4,996.3 1230.6,992.7 1223.2,999.3 1208.9,993.3 1196.9,996.9 1184.9,1001.7 1172.9,993.8 1156.1,995.7 1146.6,1004.1 1137.0,1009.6 1127.4,1006.5 1117.8,1010.1 1103.4,1000.5 1091.5,996.2 1079.5,991.4 1062.7,989.7 1053.1,984.5" fill="#c3a2b2" stroke="#26262a" stroke-width="1.15" stroke-linejoin="round"/>
<polygon points="1344.0,976.9 1358.1,976.8 1367.0,973.2 1375.8,966.1 1382.9,944.9 1394.4,937.5 1404.2,941.4 1412.1,945.8 1421.9,947.6 1432.5,945.8 1450.2,947.0 1460.8,942.8 1471.5,939.6 1480.3,935.2 1489.2,928.1 1498.9,927.2 1507.8,917.4 1528.1,917.4 1537.0,921.0 1545.8,922.8 1556.0,926.8 1556.0,996.3 1545.8,990.6 1537.0,992.4 1528.1,987.8 1517.5,984.2 1507.8,987.8 1498.9,984.2 1489.2,996.3 1480.3,993.6 1471.5,1005.1 1460.8,1007.8 1450.2,1003.0 1432.5,1001.9 1421.9,1003.0 1412.1,1001.9 1394.4,1010.4 1384.7,1006.0 1375.0,1008.6 1366.1,980.3 1358.1,976.8 1344.0,976.9" fill="#9dcab3" stroke="#26262a" stroke-width="1.15" stroke-linejoin="round"/>
<polygon points="1460.8,1007.8 1471.5,1005.1 1480.3,993.6 1489.2,996.3 1498.9,984.2 1507.8,987.8 1517.5,984.2 1528.1,987.8 1537.0,992.4 1545.8,990.6 1556.0,996.3 1556.0,998.4 1545.8,1001.6 1537.0,1006.0 1528.1,1006.9 1517.5,1008.6 1507.8,1010.0 1498.9,1010.0 1489.2,1008.6 1480.3,1010.0 1471.5,1009.0 1460.8,1008.6" fill="#b9e0c6"/>
<polyline points="1375.0,1008.6 1384.7,1006.9 1394.4,1007.8 1404.2,1012.2 1412.1,1015.7 1421.9,1016.6 1432.5,1014.0 1441.4,1011.3 1450.2,1012.5 1460.8,1008.6 1471.5,1009.0 1480.3,1010.0 1489.2,1008.6 1498.9,1010.0 1507.8,1010.0 1517.5,1008.6 1528.1,1006.9 1537.0,1006.0 1545.8,1001.6 1556.0,998.4" fill="none" stroke="#2c2c30" stroke-width="0.900"/>
<polyline points="504.5,1030.5 517.7,1022.0 535.6,1020.2 550.0,1023.3 574.0,1028.0 583.5,1025.7 595.5,1029.3 607.5,1029.7 619.5,1026.9 649.4,1023.3 660.2,1026.9 672.2,1029.7 686.6,1026.4 705.7,1024.0 715.3,1026.9 727.3,1029.3 763.2,1029.3 780.0,1026.9 787.2,1029.3 856.7,1029.3 868.6,1026.9 887.8,1024.5 899.8,1026.4 926.1,1028.8 935.7,1025.7 947.7,1026.9 957.3,1029.7" fill="none" stroke="#2c2c30" stroke-width="0.900"/>
<polyline points="1375.0,1008.6 1368.5,1031.0" fill="none" stroke="#2c2c30" stroke-width="0.900"/>
<polyline points="333.0,964.1 1101.0,964.1 1117.5,958.3 1127.2,959.2 1135.6,953.2 1225.0,952.3 1375.8,952.3 1382.9,944.9 1394.4,937.5 1475.0,937.5 1480.3,935.2 1489.2,928.1 1498.9,927.2 1507.8,917.4 1556.0,917.4" fill="none" stroke="#3c3e48" stroke-width="1.200"/>
</g>
<g clip-path="url(#cropclip)" fill="#14232c">
<text x="639.600" y="157.100" textLength="41.600">Ordres :</text><text x="687.200" y="157.100" font-weight="bold">0</text>
<rect x="697.500" y="149.800" width="12" height="8.600" fill="#d9e1e4" opacity="0.850"/><path d="M700.500 151.500l6 5.500M706.500 151.500l-6 5.500" stroke="#c4ccd0" stroke-width="1.800"/>
<text x="720" y="157.100">/</text><text x="728.400" y="157.100" font-weight="bold">0</text>
<g transform="translate(736.5,148.6)"><circle cx="5" cy="4.600" r="2.600" fill="none" stroke="#2a62d8" stroke-width="2.400" stroke-dasharray="1.600 1.100"/><circle cx="5" cy="4.600" r="2" fill="none" stroke="#2a62d8" stroke-width="1.400"/><circle cx="11.400" cy="8.800" r="2.300" fill="none" stroke="#2a62d8" stroke-width="1.700"/></g>
<text x="1067.100" y="157.100" textLength="45.400">Position :</text><text x="1126.200" y="157.100" font-weight="bold">0</text>
<path d="M1139 151.300l7 6M1146 151.300l-7 6" stroke="#e9a3ad" stroke-width="2.200"/>
<text x="1158.600" y="157.100">/</text><text x="1167" y="157.100" font-weight="bold">0</text>
<g transform="translate(1175,148.6)"><circle cx="5" cy="4.600" r="2.600" fill="none" stroke="#2a62d8" stroke-width="2.400" stroke-dasharray="1.600 1.100"/><circle cx="5" cy="4.600" r="2" fill="none" stroke="#2a62d8" stroke-width="1.400"/><circle cx="11.400" cy="8.800" r="2.300" fill="none" stroke="#2a62d8" stroke-width="1.700"/></g>
<rect x="630.600" y="179.400" width="89.800" height="22.500" rx="3.500" fill="#fff" stroke="#7e9fb1" stroke-width="1"/>
<rect x="633.100" y="181.900" width="68" height="17" fill="#3a6ed8"/>
<rect x="701.100" y="181.900" width="16.600" height="17" rx="1.500" fill="url(#btng)"/>
<path d="M705.800 187.900h7.800l-3.900 4.600z" fill="#0a0a0a"/>
<text x="634.200" y="194.400" fill="#fff" textLength="52.700">200 unités</text>
<rect x="1114.300" y="179.500" width="93.200" height="22.300" rx="3.500" fill="#fff" stroke="#7e9fb1" stroke-width="1"/>
<rect x="1188" y="181.800" width="17" height="17" rx="1.500" fill="url(#btng)"/>
<path d="M1192.600 187.900h7.800l-3.900 4.600z" fill="#0a0a0a"/>
<text x="1117.800" y="194.400" fill="#16242c" textLength="48.500">3 minutes</text>
<rect x="333" y="216.6" width="112.5" height="17.6" fill="url(#lbl)"/><path d="M333 233.7H445.0V216.6" fill="none" stroke="#8eb0c2" stroke-width="1"/>
<text x="333" y="228.900">Prix</text>
<g transform="translate(356.5,218)" fill="none" stroke-linecap="round" stroke-linejoin="round"><path d="M1.700 12.100L7.300 5.500M7.300 5.500L6.700 2.300L9 1.700M7.300 5.500L11.300 5.900L12.600 3.300" stroke="#1d1d1d" stroke-width="3.700"/><path d="M1.700 12.100L7.300 5.500M7.300 5.500L6.700 2.300L9 1.700M7.300 5.500L11.300 5.900L12.600 3.300" stroke="#fff" stroke-width="1.800"/></g>
<g transform="translate(374.6,217.9)"><rect x="0.700" y="0.700" width="12.400" height="12.600" rx="1.600" fill="#fff" stroke="#1c1c1c" stroke-width="1.400"/><path d="M0.700 4.200V2.300a1.600 1.600 0 0 1 1.600-1.600h9.200a1.600 1.600 0 0 1 1.600 1.600V4.200z" fill="#111"/></g>
<g transform="translate(392.25,217.75)"><circle cx="7" cy="7" r="6.800" fill="url(#xg)"/><path d="M4.500 4.500l5 5M9.500 4.500l-5 5" stroke="#fff" stroke-width="2.300" stroke-linecap="round"/></g>
<g transform="translate(410.4,218)"><path d="M.600 .500h8.900L12.700 3.600V12.300H.600z" fill="#fbfdff" stroke="#a4bfdc" stroke-width="0.900"/><path d="M9.500 .500V3.600H12.700" fill="none" stroke="#a4bfdc" stroke-width="0.800"/><path d="M6.600 10.400l4.400-4.200H8V3H5.300v3.200H2.200z" fill="#e8323a"/></g>
<g transform="translate(428.5,218)"><path d="M.600 .500h8.900L12.700 3.600V12.300H.600z" fill="#fbfdff" stroke="#a4bfdc" stroke-width="0.900"/><path d="M9.500 .500V3.600H12.700" fill="none" stroke="#a4bfdc" stroke-width="0.800"/><path d="M6.600 2.700l4.400 3.900H8v3.500H5.300V6.600H2.200z" fill="#1fb81f"/></g>
<text x="450.300" y="228.900" textLength="182.700">Jour :+Haut 28 491,3 +Bas 28 288,3</text>
<text x="332.600" y="508.900" textLength="88.600">© IT-Finance.com</text><text x="427" y="508.900" font-style="italic" textLength="105">Données indicatives</text>
<rect x="333" y="515.6" width="227" height="17.6" fill="url(#lbl)"/><path d="M333 532.7H559.5V515.6" fill="none" stroke="#8eb0c2" stroke-width="1"/>
<text x="333.200" y="527.800" textLength="169">Relative strength index (RSI) (14)</text>
<g transform="translate(506.5,516.6)" fill="none" stroke-linecap="round" stroke-linejoin="round"><path d="M1.700 12.100L7.300 5.500M7.300 5.500L6.700 2.300L9 1.700M7.300 5.500L11.300 5.900L12.600 3.300" stroke="#1d1d1d" stroke-width="3.700"/><path d="M1.700 12.100L7.300 5.500M7.300 5.500L6.700 2.300L9 1.700M7.300 5.500L11.300 5.900L12.600 3.300" stroke="#fff" stroke-width="1.800"/></g>
<g transform="translate(524.8,516.8)"><rect x="0.700" y="0.700" width="12.400" height="12.600" rx="1.600" fill="#fff" stroke="#1c1c1c" stroke-width="1.400"/><path d="M0.700 4.200V2.300a1.600 1.600 0 0 1 1.600-1.600h9.200a1.600 1.600 0 0 1 1.600 1.600V4.200z" fill="#111"/></g>
<g transform="translate(542.2,516.8)"><circle cx="7" cy="7" r="6.800" fill="url(#xg)"/><path d="M4.500 4.500l5 5M9.500 4.500l-5 5" stroke="#fff" stroke-width="2.300" stroke-linecap="round"/></g>
<rect x="333" y="713.1" width="146.6" height="17.4" fill="url(#lbl)"/><path d="M333 730.0H479.1V713.1" fill="none" stroke="#8eb0c2" stroke-width="1"/>
<text x="333" y="726.0" textLength="89">Mon indicateur(7)</text>
<g transform="translate(426.6,714.1)" fill="none" stroke-linecap="round" stroke-linejoin="round"><path d="M1.700 12.100L7.300 5.500M7.300 5.500L6.700 2.300L9 1.700M7.300 5.500L11.300 5.900L12.600 3.300" stroke="#1d1d1d" stroke-width="3.700"/><path d="M1.700 12.100L7.300 5.500M7.300 5.500L6.700 2.300L9 1.700M7.300 5.500L11.300 5.900L12.600 3.300" stroke="#fff" stroke-width="1.800"/></g>
<g transform="translate(444.6,714.3000000000001)"><rect x="0.700" y="0.700" width="12.400" height="12.600" rx="1.600" fill="#fff" stroke="#1c1c1c" stroke-width="1.400"/><path d="M0.700 4.200V2.300a1.600 1.600 0 0 1 1.600-1.600h9.200a1.600 1.600 0 0 1 1.600 1.600V4.200z" fill="#111"/></g>
<g transform="translate(462.2,714.3000000000001)"><circle cx="7" cy="7" r="6.800" fill="url(#xg)"/><path d="M4.500 4.500l5 5M9.500 4.500l-5 5" stroke="#fff" stroke-width="2.300" stroke-linecap="round"/></g>
<rect x="333" y="899.1" width="146.6" height="17.4" fill="url(#lbl)"/><path d="M333 916.0H479.1V899.1" fill="none" stroke="#8eb0c2" stroke-width="1"/>
<text x="333" y="912.0" textLength="89">Mon indicateur(3)</text>
<g transform="translate(426.6,900.1)" fill="none" stroke-linecap="round" stroke-linejoin="round"><path d="M1.700 12.100L7.300 5.500M7.300 5.500L6.700 2.300L9 1.700M7.300 5.500L11.300 5.900L12.600 3.300" stroke="#1d1d1d" stroke-width="3.700"/><path d="M1.700 12.100L7.300 5.500M7.300 5.500L6.700 2.300L9 1.700M7.300 5.500L11.300 5.900L12.600 3.300" stroke="#fff" stroke-width="1.800"/></g>
<g transform="translate(444.6,900.3000000000001)"><rect x="0.700" y="0.700" width="12.400" height="12.600" rx="1.600" fill="#fff" stroke="#1c1c1c" stroke-width="1.400"/><path d="M0.700 4.200V2.300a1.600 1.600 0 0 1 1.600-1.600h9.200a1.600 1.600 0 0 1 1.600 1.600V4.200z" fill="#111"/></g>
<g transform="translate(462.2,900.3000000000001)"><circle cx="7" cy="7" r="6.800" fill="url(#xg)"/><path d="M4.500 4.500l5 5M9.500 4.500l-5 5" stroke="#fff" stroke-width="2.300" stroke-linecap="round"/></g>
<rect x="367.300" y="252.600" width="428.700" height="103.900" fill="#9dbbc9" stroke="#86a5b4" stroke-width="1"/>
<rect x="378.300" y="266.300" width="406.700" height="79.300" rx="3" fill="url(#tipg)" stroke="#7f9dab" stroke-width="1"/>
<path d="M388.800 275.500V261.300a2.500 2.500 0 0 1 2.500-2.500h98.700a2.500 2.500 0 0 1 2.500 2.500V275.500" fill="#c9e7f5" stroke="#7f9dab" stroke-width="1"/>
<rect x="389.400" y="266.900" width="102.500" height="9" fill="#cae8f6"/>
<text x="393.800" y="272" font-weight="bold" font-size="12.100" fill="#111c22">Propriétés : Prix</text>
</g>
<path fill-rule="evenodd" d="M325.5 100H1555V1030H325.5z M332.1 147.4H1223.9V982.7H332.1z" fill="#1f1f1f" fill-opacity="0.845"/>
<rect x="325.5" y="100" width="1229.5" height="47.500" fill="#232326"/>
<rect x="325.500" y="100" width="296.500" height="12.200" fill="#27272c"/>
<rect x="622" y="100" width="297" height="12.200" fill="#404040"/>
<rect x="336" y="100" width="22" height="1.200" fill="#5a2428"/>
<path d="M642 100h22a11 4.500 0 0 1-22 0z" fill="#2d3a55"/>
<rect x="325.5" y="112.200" width="1229.5" height="2.800" fill="#39393b"/>
<rect x="325.5" y="115" width="1229.5" height="26.500" fill="#2c313d"/>
<rect x="325.5" y="141.500" width="1229.5" height="5" fill="#333436"/>
<g font-weight="bold" font-size="11.700" fill="#41454f">
<path d="M338 124h5v7h-5zM344.500 119.500h5v11h-5zM347 117v2.500" fill="none" stroke="#3f4450" stroke-width="1.200"/><path d="M352 126h6l-3 3.500z" fill="#434854"/>
<text x="362" y="133">DOW</text>
<rect x="403" y="123.500" width="10" height="10" fill="#474a50"/><rect x="407" y="125.500" width="2.200" height="2" fill="#2c313d"/><rect x="407" y="128.500" width="2.200" height="4" fill="#2c313d"/>
<rect x="424" y="120.600" width="98" height="16" fill="#1e4a25"/>
<text x="427" y="133" fill="#3b6d40">28 447,8 (+0,11%)</text>
<text x="528" y="133">14:02:33</text><text x="577.500" y="133">Wall Street Cash (1€)</text>
</g>
<rect x="1223.9" y="146.500" width="331.0999999999999" height="17.800" fill="#35383a"/>
<rect x="1223.9" y="164.300" width="331.0999999999999" height="1.600" fill="#2e3032"/>
<linearGradient id="hdrd" x1="0" y1="0" x2="0" y2="1"><stop offset="0" stop-color="#313538"/><stop offset="0.600" stop-color="#3d3f40"/><stop offset="1" stop-color="#424242"/></linearGradient>
<rect x="1223.9" y="165.900" width="331.0999999999999" height="49.900" fill="url(#hdrd)"/>
<rect x="1223.9" y="215.800" width="331.0999999999999" height="1.200" fill="#333435"/>
<text x="1512.500" y="157.100" fill="#27292b">Gain late</text>
<rect x="325.5" y="112" width="4" height="918" fill="#2b3140"/>
<rect x="332.1" y="147.4" width="891.8" height="835.3" fill="none" stroke="#fff" stroke-width="2.400"/>
<circle cx="331.8" cy="147.3" r="11.300" fill="#fff" stroke="#141414" stroke-width="1.600"/>
<circle cx="1223.6" cy="147.4" r="11.300" fill="#fff" stroke="#141414" stroke-width="1.600"/>
<circle cx="331.8" cy="982.3" r="11.300" fill="#fff" stroke="#141414" stroke-width="1.600"/>
<circle cx="1222.9" cy="982.5" r="11.300" fill="#fff" stroke="#141414" stroke-width="1.600"/>
</svg>
<div class="tip j" style="left:394.600px;top:183px;width:376.200px;line-height:11.300px;letter-spacing:0.150px">Cliquez sur cette icône pour modifier les propriétés du graphique Prix</div>
<div class="tip" style="left:394.600px;top:198px;width:376.200px;line-height:11.300px;letter-spacing:0.180px">(style, couleur, indicateurs superposés, ...).</div>
<div class="tip j" style="left:394.600px;top:213px;width:376.200px;line-height:11.300px;letter-spacing:0.150px">Vous pouvez également définir une configuration par défaut pour les</div>
<div class="tip" style="left:394.600px;top:228px;width:376.200px;line-height:11.300px;letter-spacing:0.080px">graphiques Prix.</div>
</div>
<div id="titlebar" class="abs"></div>
<div id="back" class="abs"><svg width="60" height="40" viewBox="0 0 60 40"><path d="M38 19.5H23.5M30 12.5L23 19.5L30 26.5" fill="none" stroke="#fff" stroke-width="1.3"/></svg></div>
<div class="t" style="left:75px;top:14px;font-size:14.5px;line-height:14.5px;">Photos</div>
<svg class="abs" style="left:1582px;top:9px" width="24" height="20" viewBox="0 0 24 20"><path d="M6.5 15.5h10.5a3.2 3.2 0 0 0 .6-6.3 4.6 4.6 0 0 0-8.6-1.6 3.4 3.4 0 0 0-3.6 2.2 2.9 2.9 0 0 0 1.1 5.7z" fill="#101016" stroke="#08080c" stroke-width="1.7"/><path d="M4 4.5L19 17" stroke="#08080c" stroke-width="1.8"/></svg>
<div class="t" style="left:1614px;top:13px;font-size:14.6px;line-height:14.6px;">OneDrive</div>
<svg class="abs" style="left:1760px;top:0" width="160" height="40" viewBox="0 0 160 40"><path d="M11 19.5h12" stroke="#fff" stroke-width="1.2"/><path d="M68.5 16.5h9v9h-9z M70.5 16.5v-2.5h9.5v9.5h-2.5" fill="none" stroke="#fff" stroke-width="1.1"/><path d="M125.5 14.2l11.4 11.4M136.9 14.2l-11.4 11.4" stroke="#fff" stroke-width="1.2"/></svg>
<div id="toolbar" class="abs"></div><div id="tab" class="abs"></div>
<svg class="abs" style="left:536px;top:54px" width="22" height="22" viewBox="0 0 22 22"><path d="M5.5 1v15.5H21M1 5.5h15.5V21M5.8 16.2L20.6 1.4" fill="none" stroke="#fff" stroke-width="1.3"/></svg>
<div class="t" style="left:567px;top:57px;font-size:15px;line-height:15px;">Rogner et faire pivoter</div>
<svg class="abs" style="left:747px;top:54px" width="20" height="22" viewBox="0 0 20 22"><path d="M2.7 2.3h13.6v6.2H2.7zM4 8.500v3.400h3.600v6.300a1.900 1.900 0 0 0 3.800 0v-6.300h3.600V8.500" fill="none" stroke="#fff" stroke-width="1.400"/></svg>
<div class="t" style="left:776px;top:58px;font-size:14.6px;line-height:14.6px;">Filtres</div>
<svg class="abs" style="left:844.4px;top:53.3px" width="22" height="22" viewBox="0 0 22 22"><circle cx="11" cy="11" r="3.9" fill="none" stroke="#fff" stroke-width="1.3"/><path d="M11 7.100a3.900 3.900 0 0 0 0 7.800z" fill="#fff"/><path d="M11 1.800v3.100M11 17.100v3.100M1.800 11h3.100M17.100 11h3.100M4.500 4.500l2.200 2.200M15.300 15.300l2.200 2.200M4.500 17.500l2.200-2.200M15.300 6.700l2.200-2.200" stroke="#fff" stroke-width="1.400"/></svg>
<div class="t" style="left:876px;top:58px;font-size:14.8px;line-height:14.8px;">Ajustements</div>
<svg class="abs" style="left:1270px;top:53px" width="22" height="24" viewBox="0 0 22 24"><path d="M2.3 2V8H9M2.500 7.800C4.600 3.800 9 1.200 13.200 2.600c4.400 1.500 6 6.500 3.500 10.300L6.700 21.700" fill="none" stroke="#fff" stroke-width="1.500"/></svg>
<div class="t" style="left:1300px;top:57px;font-size:15.3px;line-height:15.3px;">Annuler tout</div>
<svg class="abs" style="left:1415px;top:53px" width="22" height="24" viewBox="0 0 22 24"><path d="M17.500 2V8H10.800M17.300 7.800C15.200 3.800 10.800 1.200 6.600 2.600c-4.400 1.500-6 6.500-3.500 10.300L13.100 21.700" fill="none" stroke="#7a7a7a" stroke-width="1.500"/></svg>
<div class="t" style="left:1445.5px;top:58px;font-size:14.7px;line-height:14.7px;color:#6e6e6e">Restaurer tout</div>
<div id="panel" class="abs"></div>
<div class="t" style="left:1648px;top:65px;font-size:16.8px;line-height:16.8px;font-weight:bold">Rogner et faire pivoter</div>
<div class="abs" style="left:1580px;top:100px;width:315px;height:1px;background:#5a5a5a"></div>
<div class="t" style="left:1580px;top:126px;font-size:16.6px;line-height:16.6px;">Redressement</div>
<div class="t" style="left:1874px;top:126px;font-size:16.6px;line-height:16.6px;color:#9a9a9a">0 °</div>
<div class="abs" style="left:1580px;top:167px;width:158px;height:3px;background:#0078d7;border-radius:2px"></div>
<div class="abs" style="left:1738px;top:167px;width:157px;height:3px;background:#7d7d7d;border-radius:2px"></div>
<div class="abs" style="left:1725.5px;top:156.5px;width:24px;height:24px;border-radius:12px;background:#0078d7"></div>
<div class="btn" style="left:1580px;top:204px;width:153px;height:60px"></div>
<div class="btn" style="left:1743px;top:204px;width:152px;height:60px"></div>
<div class="btn" style="left:1580px;top:275px;width:315px;height:60px"></div>
<div class="btn" style="left:1580px;top:346px;width:315px;height:60px"></div>
<svg class="abs" style="left:1610px;top:219px" width="30" height="30" viewBox="0 0 30 30"><path d="M2.8 14.8A11.7 11.7 0 1 1 17.9 25.8" fill="none" stroke="#fff" stroke-width="1.8"/><path d="M17.7 20V26.4H24" fill="none" stroke="#fff" stroke-width="1.9"/><circle cx="14.5" cy="14.5" r="2.4" fill="none" stroke="#fff" stroke-width="1.7"/></svg>
<div class="t" style="left:1648px;top:227px;font-size:17px;line-height:17px;">Pivoter</div>
<svg class="abs" style="left:1760px;top:222px" width="30" height="22" viewBox="0 0 30 22"><path d="M3 2.3v17l8.3-8.5z" fill="#fff"/><path d="M15.3 1.5v19" stroke="#fff" stroke-width="1.5" stroke-dasharray="1.6 1.3"/><path d="M26.6 3.6v14.4l-7-7.2z" fill="none" stroke="#fff" stroke-width="1.4"/></svg>
<div class="t" style="left:1799px;top:227px;font-size:17px;line-height:17px;">Retourner</div>
<svg class="abs" style="left:1597px;top:294px" width="28" height="20" viewBox="0 0 28 20"><rect x="1.9" y="2.1" width="24.2" height="15.8" fill="none" stroke="#fff" stroke-width="1.6" stroke-dasharray="1.7 1.7"/><rect x="8.6" y="2.1" width="10.6" height="15.8" fill="#555" stroke="#fff" stroke-width="1.5"/></svg>
<div class="t" style="left:1634px;top:298px;font-size:17.4px;line-height:17.4px;">Proportions :</div>
<div class="t" style="left:1738.3px;top:298px;font-size:16.5px;line-height:16.5px;color:#9b9b9b">Personnalisé</div>
<svg class="abs" style="left:1860px;top:298px" width="20" height="14" viewBox="0 0 20 14"><path d="M2.2 3.4L9.6 10.8L17 3.4" fill="none" stroke="#fff" stroke-width="1.4"/></svg>
<svg class="abs" style="left:1677px;top:361px" width="24" height="28" viewBox="0 0 24 28"><path d="M2.1 2.5V10.1H9.4M2.3 9.9C5 4 11 1.2 16.2 3.6c4.600 2.200 6 7.400 3.200 11.600L7.600 26.500" fill="none" stroke="#fff" stroke-width="1.600"/></svg>
<div class="t" style="left:1711px;top:370px;font-size:16.85px;line-height:16.85px;">Réinitialiser</div>
<div class="abs" style="left:1580px;top:948px;width:124px;height:57px;background:#0078d7"></div>
<div class="abs" style="left:1705px;top:948px;width:30px;height:57px;background:#0078d7;border-radius:3px"></div>
<div class="abs" style="left:1740px;top:948px;width:155px;height:57px;background:#555555;border-radius:3px"></div>
<div class="t" style="left:1600px;top:958px;font-size:17px;line-height:17px;">Enregistrer</div>
<div class="t" style="left:1600px;top:981px;font-size:17px;line-height:17px;">une copie</div>
<svg class="abs" style="left:1710px;top:969px" width="20" height="14" viewBox="0 0 20 14"><path d="M3 3.6L9.8 10.4L16.6 3.6" fill="none" stroke="#fff" stroke-width="1.4"/></svg>
<div class="t" style="left:1787px;top:970px;font-size:17.4px;line-height:17.4px;">Annuler</div>
<div id="taskbar" class="abs"></div>
<svg class="abs" style="left:20px;top:1044px" width="21" height="21" viewBox="0 0 21 21"><path d="M0 3l8.6-1.2v8.2H0zM9.6 1.65L20.5 0v10H9.6zM0 11h8.6v8.2L0 18zM9.6 11h10.9v10L9.6 19.35z" fill="#fff"/></svg>
<div id="search" class="abs"></div>
<svg class="abs" style="left:74px;top:1043px" width="24" height="24" viewBox="0 0 24 24"><circle cx="14.4" cy="9.3" r="6.3" fill="none" stroke="#222" stroke-width="1.6"/><path d="M10 13.8L2.2 21.8" stroke="#222" stroke-width="1.8"/></svg>
<div class="t" style="left:110px;top:1046px;font-size:19.1px;line-height:19.1px;color:#2b2b2b">Taper ici pour rechercher</div>
<svg class="abs" style="left:508px;top:1043px" width="24" height="24" viewBox="0 0 24 24"><circle cx="11.8" cy="11.6" r="8.3" fill="none" stroke="#fff" stroke-width="2.6"/></svg>
<svg class="abs" style="left:568px;top:1043px" width="24" height="24" viewBox="0 0 24 24"><path d="M2.2 6.2h13v11.4h-13zM2.2 2.4h13M2.2 21.2h13M19.2 2v5M19.2 10.6v5M19.2 18v3.6" fill="none" stroke="#fff" stroke-width="1.5"/></svg>
<svg class="abs" style="left:628px;top:1039px" width="32" height="32" viewBox="0 0 32 32"><defs><linearGradient id="eg1" x1="0" y1="0" x2="1" y2="1"><stop offset="0" stop-color="#35c1f1"/><stop offset="1" stop-color="#0c59a4"/></linearGradient><linearGradient id="eg2" x1="0" y1="0" x2="1" y2="0"><stop offset="0" stop-color="#2bc3d2"/><stop offset="1" stop-color="#6ad46a"/></linearGradient></defs><circle cx="16" cy="16" r="14.6" fill="url(#eg1)"/><path d="M1.6 14C3 6 9 1.4 16 1.4c8 0 14.6 5.6 14.6 12.4 0 4-3 6.6-6.6 6.6-3 0-4.6-1.4-4.6-2.6 0-1 1-1.4 1-3.2 0-2.6-2.4-4.6-5.6-4.6C9.600 10 4 12 1.600 14z" fill="url(#eg2)"/><path d="M12 12c-4 2-5.600 6.500-3.800 10.800 1.800 4.200 6 6.600 10.800 6.400 3-.2 6-1.400 8-3.600-3 1.600-7 1.600-10-.6-3.600-2.600-4.400-7-2.600-10.400z" fill="#0a4a8f"/></svg>
<svg class="abs" style="left:690px;top:1041px" width="32" height="26" viewBox="0 0 32 26"><path d="M2.5 3a1 1 0 0 1 1-1h8.300l1.900 1.800H2.500z" fill="#e3a008"/><rect x="2.500" y="3.500" width="26.900" height="20.300" rx="0.800" fill="#fbd466"/><rect x="2.500" y="3.500" width="26.900" height="3" fill="#f4bf3a"/><path d="M6.900 14.200h18.100v9.700h-4.400v-5h-9.300v5H6.900z" fill="#3a97e2"/><rect x="11.300" y="18.900" width="9.300" height="4.900" fill="#f9d465"/></svg>
<div class="ul" style="left:681px;width:51px"></div>
<svg class="abs" style="left:752px;top:1040px" width="32" height="30" viewBox="0 0 32 30"><path d="M1.100 10.100L16.100 1l15 9.100z" fill="#0f63b5"/><rect x="1.100" y="10.100" width="30" height="18.800" fill="#2eb2ef"/><path d="M1.100 10.100L31.100 28.900H1.100z" fill="#1f90dd"/><path d="M3.600 10.100h25L16.100 18.900z" fill="#f4f4f4"/><path d="M3.600 10.100h25l-2 1.500h-21z" fill="#ffffff"/></svg>
<svg class="abs" style="left:815px;top:1039px" width="30" height="30" viewBox="0 0 30 30"><circle cx="14.800" cy="15.300" r="13.200" fill="#0b0b0b" stroke="#e62222" stroke-width="1.800"/><circle cx="13" cy="16" r="4.600" fill="none" stroke="#e62222" stroke-width="3.600" stroke-dasharray="2.400 1.300"/><circle cx="13" cy="16" r="3.600" fill="#e62222"/><circle cx="13.400" cy="16" r="1.900" fill="#0b0b0b"/><path d="M15.500 21.500c3-1 4.500-4 4.300-7.500l-2.300.3 3.700-5 3 5.200-2.200-.3c.3 4.500-2.500 7.600-6.500 7.300z" fill="#e62222"/></svg>
<svg class="abs" style="left:875px;top:1037px" width="34" height="34" viewBox="0 0 34 34"><defs><radialGradient id="ff1" cx="0.700" cy="0.200" r="0.900"><stop offset="0" stop-color="#ffe14a"/><stop offset="0.400" stop-color="#ff9a2e"/><stop offset="0.800" stop-color="#ff3a4f"/><stop offset="1" stop-color="#d8249a"/></radialGradient></defs><path d="M17 5c2-1.500 3.500-3 4-4.500 2 2.500 3.500 4.500 5.500 6 1-1 1.500-2 1.500-3 3 4 4.500 8.500 4 13.500C31 25.500 24.500 32 16.800 32 8.500 32 2 25.600 2 17.800c0-4 1-7 3.500-9.800 0 1.500.5 2.500 1.500 3.500C8 8.500 12 5.500 17 5z" fill="url(#ff1)"/><circle cx="16.500" cy="18.500" r="7" fill="#7542e5"/><path d="M9.500 17c2-3.500 6-4.500 9-3.500-2.500.5-3.500 2-3.500 3.500 2 0 3.500 1 4.500 2.500-3 2.500-8 1.500-10-2.500z" fill="#ff8a2a"/></svg>
<div class="ul" style="left:867px;width:51px"></div>
<svg class="abs" style="left:940px;top:1040px" width="30" height="30" viewBox="0 0 30 30"><path d="M8.500 10.500v16.300" stroke="#c62828" stroke-width="1.100"/><path d="M19.700 3.200v23.800" stroke="#1e9a1e" stroke-width="1.100"/><rect x="4.900" y="13.900" width="7.200" height="9.200" fill="#ee6a6a" stroke="#c03030" stroke-width="1"/><rect x="16.100" y="7.700" width="7.200" height="14" fill="#5ade5a" stroke="#1f9f1f" stroke-width="1"/></svg>
<div class="ul" style="left:929px;width:51px"></div>
<div class="abs" style="left:986px;top:1030px;width:61px;height:50px;background:rgba(255,255,255,0.2)"></div>
<svg class="abs" style="left:1002px;top:1041px" width="28" height="28" viewBox="0 0 28 28"><defs><linearGradient id="ph1" x1="0" y1="0" x2="0" y2="1"><stop offset="0" stop-color="#2fb4f2"/><stop offset="1" stop-color="#2a86dc"/></linearGradient></defs><rect x="0" y="0" width="28" height="28" rx="1.500" fill="url(#ph1)"/><path d="M0 20.500L10 10l18 18H1.500A1.500 1.500 0 0 1 0 26.500z" fill="#143f84"/><path d="M14 14.600l4.500-4 9.500 9.500V28H27.400z" fill="#5f7fe0"/><circle cx="18.400" cy="6.600" r="2.500" fill="#fff"/></svg>
<div class="ul" style="left:986px;width:61px"></div>
<svg class="abs" style="left:1646px;top:1044px" width="112" height="22" viewBox="0 0 112 22"><path d="M3 14.600l8-8 8 8" fill="none" stroke="#fff" stroke-width="1.300"/><path d="M34.500 6.500h15v10h-15z" fill="#fff"/><path d="M33.500 5.500h17v12h-17z M50.500 9v5h1.600v-5z" fill="none" stroke="#fff" stroke-width="1"/><path d="M31 3v3M34 3v3M30 6h5v2.500a2.500 2.500 0 0 1-5 0zM32.500 11v3.500h2" fill="none" stroke="#fff" stroke-width="1.100"/><path d="M64.500 18.500A13.500 13.500 0 0 1 78 5M68.500 18.500A9.500 9.500 0 0 1 78 9M72.500 18.500A5.500 5.500 0 0 1 78 13" fill="none" stroke="#fff" stroke-width="1.200"/><circle cx="77" cy="17.500" r="1.600" fill="#fff"/><path d="M91.500 8.500h3l4-3.500v13l-4-3.500h-3z" fill="none" stroke="#fff" stroke-width="1.100"/><path d="M102 8.500l6 6M108 8.500l-6 6" stroke="#fff" stroke-width="1.200"/></svg>
<div class="t" style="left:1791px;top:1037px;font-size:13.7px;line-height:13.7px;">14:04</div>
<div class="t" style="left:1770.6px;top:1059px;font-size:14.95px;line-height:14.95px;">23/10/2020</div>
<svg class="abs" style="left:1867px;top:1044px" width="24" height="22" viewBox="0 0 24 22"><path d="M2.500 2.200h19v14.300h-7l-2.500 2.800-2.500-2.800h-7z" fill="none" stroke="#fff" stroke-width="1.300"/></svg>
<div class="abs" style="left:1914px;top:1030px;width:1px;height:50px;background:#6b7380"></div>
</body></html>
